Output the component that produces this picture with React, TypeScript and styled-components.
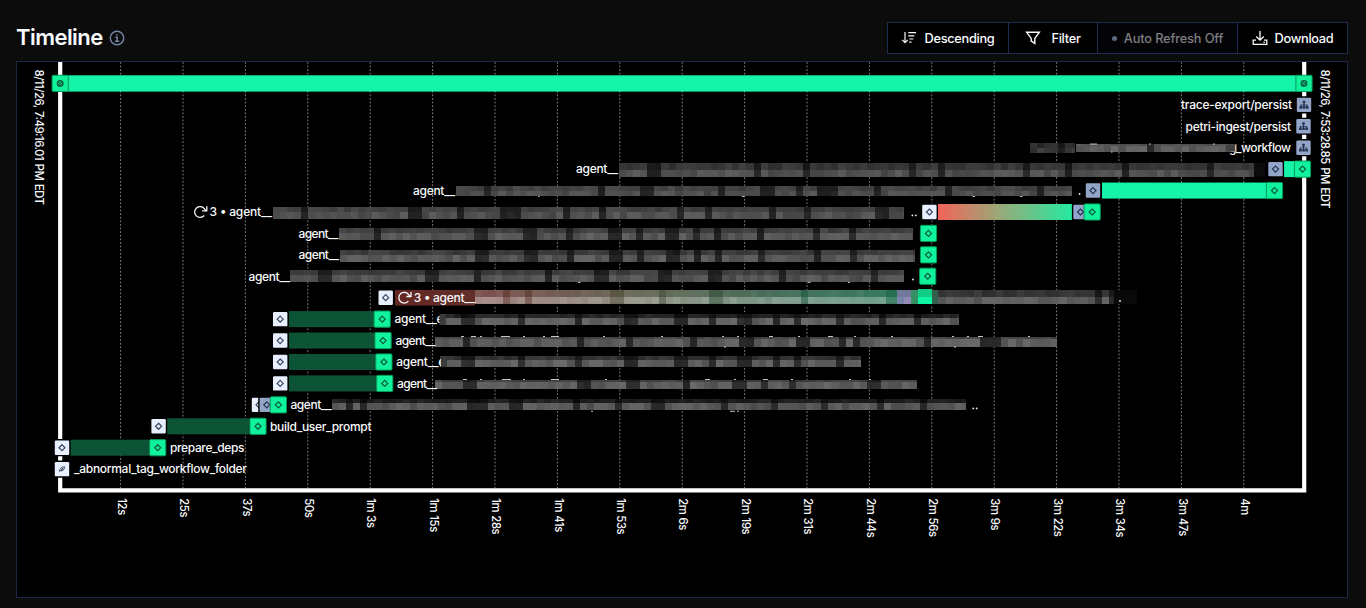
import React from "react";
import styled, { createGlobalStyle } from "styled-components";

const GlobalStyle = createGlobalStyle`
  * { box-sizing: border-box; }
  body {
    margin: 0;
    background: #0c0c0c;
    color: #f8fafc;
    font-family: Inter, "Liberation Sans", sans-serif;
    overflow: hidden;
  }
`;

const Page = styled.main`
  display: flex;
  flex-direction: column;
  height: 608px;
  padding: 22px 18px 10px 16px;
`;

const Header = styled.header`
  display: flex;
  align-items: center;
  justify-content: space-between;
  height: 32px;
  margin-bottom: 7px;
`;

const Heading = styled.div`
  display: flex;
  align-items: center;
  gap: 6px;
`;

const Title = styled.h2`
  margin: -2px 0 0;
  font-size: 22px;
  line-height: 30px;
  font-weight: 600;
  letter-spacing: -0.55px;
`;

const Toolbar = styled.div`
  display: flex;
  height: 32px;
  border: 1px solid #1f2c4d;
  background: #000;
`;

const ToolButton = styled.button<{ $width: number; $gap?: number; $muted?: boolean }>`
  display: flex;
  align-items: center;
  justify-content: center;
  gap: ${(p) => p.$gap ?? 7}px;
  width: ${(p) => p.$width}px;
  padding: 0;
  border: 0;
  background: ${(p) => (p.$muted ? "#040406" : "#000")};
  color: ${(p) => (p.$muted ? "#7c7d80" : "#f8fafc")};
  font: 500 12.8px Inter, sans-serif;
  letter-spacing: ${(p) => (p.$muted ? -0.15 : -0.3)}px;
  white-space: nowrap;
  & + & { border-left: 1px solid #1f2c4d; }
`;

const StatusDot = styled.span`
  width: 5px;
  height: 5px;
  border-radius: 50%;
  background: #5b6880;
`;

const Panel = styled.section`
  flex: 1;
  min-height: 0;
  border: 1px solid #1b2744;
  background: #000;
`;

const Chart = styled.svg`
  display: block;
  width: 1330px;
  height: 535px;
`;

const Label = styled.text`
  fill: #f8fafc;
  font: 500 12px Inter, sans-serif;
  white-space: pre;
`;

const TickLabel = styled(Label)`
  font-size: 11.3px;
  letter-spacing: -0.4px;
  word-spacing: 0.5px;
`;

const DateLabel = styled(Label)`
  font-size: 11.5px;
  word-spacing: 1px;
`;

const ROW = 21.43;
const rowY = (i: number) => 83.4 + i * ROW;

const ticks = [
  "12s", "25s", "37s", "50s", "1m 3s", "1m 15s", "1m 28s", "1m 41s", "1m 53s", "2m 6s",
  "2m 19s", "2m 31s", "2m 44s", "2m 56s", "3m 9s", "3m 22s", "3m 34s", "3m 47s", "4m",
];
const tickX = (i: number) => 120.6 + i * 62.4;

type Kind = "done" | "start" | "pending";

const palette: Record<Kind, { fill: string; stroke: string; ink: string }> = {
  done: { fill: "#10f29b", stroke: "#079a58", ink: "#0b5a3c" },
  start: { fill: "#e8effe", stroke: "#e8effe", ink: "#3a4661" },
  pending: { fill: "#92a4c8", stroke: "#92a4c8", ink: "#26344f" },
};

function Glyph({ shape, ink }: { shape: string; ink: string }) {
  if (shape === "root")
    return (
      <g fill="none" stroke={ink} strokeWidth="1.1">
        <circle r="2.9" />
        <path d="M-2.4 1.3C-.8 1.4 1.2-.4 1.4-2.3M-1.2 2.5C.6 2.3 2.3.6 2.4-1M-2.7-.3C-1.4-.4-.4-1.4-.3-2.6" />
      </g>
    );
  if (shape === "feather")
    return (
      <g fill="none" stroke={ink} strokeWidth=".9">
        <path d="M-2.7 2.5C-2.4-.6-.3-2.3 2.6-2.3C2.5.6.6 1.9-1.9 1.7M-1.5.9L1.4-1.3M-1 1.7L2 .1" />
      </g>
    );
  if (shape === "tree")
    return (
      <g fill={ink}>
        <path d="M-1.3-4h2.6v2.5H.5v1.2h3V1.2h1v2.6H1.8V1.2h.8V.6H.5v.6h.8v2.6h-2.6V1.2h.8V.6h-2.1v.6h.8v2.6h-2.7V1.2h1V-.3h3v-1.2h-.8z" />
      </g>
    );
  return <path d="M0-3L3 0L0 3L-3 0Z" fill="none" stroke={ink} strokeWidth="1.2" />;
}

function Node({ x, row, kind, shape = "diamond", clip }: { x: number; row: number; kind: Kind; shape?: string; clip?: boolean }) {
  const c = palette[kind];
  const s = kind === "done" ? 16.2 : 14.4;
  return (
    <g transform={`translate(${x} ${rowY(row)})`}>
      {clip ? null : <rect x={-8.6} y={-8.6} width={17.2} height={17.2} rx="1" fill="#000" />}
      <rect x={-s / 2} y={-s / 2} width={s} height={s} rx="1.2" fill={c.fill} stroke={kind === "done" ? c.stroke : "none"} strokeWidth="1" />
      <Glyph shape={shape} ink={c.ink} />
    </g>
  );
}

function Retry({ x, y }: { x: number; y: number }) {
  return (
    <g transform={`translate(${x} ${y})`} fill="none" stroke="#f8fafc" strokeWidth="1.3">
      <path d="M3.9 3.5A5.4 5.4 0 1 1 4.2-3L5.7-1.2" />
      <path d="M6.5-5.8V-1.2H1.9" />
    </g>
  );
}

interface Redaction {
  start: number;
  end: number;
  top: number;
  split: number;
  bottom: number;
  gaps: [number, number][];
  topLevel?: number;
  level?: number;
}

const CELL = 7.08;
const groupedGaps: [number, number][] = [
  [463, 477], [520, 527], [575, 582], [623, 638], [673, 687], [707, 715], [735, 748],
  [770, 777], [791, 798], [840, 847], [862, 868], [882, 889], [917, 924],
];
const pairGaps: [number, number][] = [
  [372, 378], [477, 490], [526, 540], [568, 575], [610, 623], [637, 644], [665, 679],
  [693, 700], [715, 722], [757, 763], [812, 819], [847, 854],
];

const redactions: Redaction[] = [
  { start: 1030, end: 1075, top: 143, split: 147.5, bottom: 152.6, gaps: [[1056, 1064]], level: 54, topLevel: 44 },
  { start: 1076, end: 1237, top: 144.3, split: 146, bottom: 151.6, gaps: [[1149, 1156], [1215, 1220]], level: 92, topLevel: 84 },
  { start: 619, end: 1254, top: 163, split: 169.6, bottom: 176.6, gaps: [[645, 658], [757, 763], [805, 813], [857, 863], [910, 917], [937, 945], [1023, 1030], [1065, 1072], [1121, 1128], [1205, 1212]], level: 80, topLevel: 55 },
  { start: 456, end: 1072, top: 186, split: 190.6, bottom: 196, gaps: [[483, 490], [596, 603], [638, 652], [715, 722], [763, 777], [798, 805], [820, 835], [877, 883], [945, 952], [1037, 1044]], level: 77, topLevel: 67 },
  { start: 273, end: 904, top: 207, split: 211.6, bottom: 219, gaps: [[302, 308], [407, 420], [456, 463], [500, 518], [546, 552], [560, 567], [596, 603], [680, 687], [708, 715], [770, 777], [805, 812], [877, 888]], level: 80, topLevel: 66 },
  { start: 339, end: 913, top: 228, split: 233, bottom: 240.2, gaps: pairGaps, level: 86, topLevel: 63 },
  { start: 340, end: 915, top: 250, split: 254.5, bottom: 261.8, gaps: pairGaps, level: 88, topLevel: 60 },
  { start: 290, end: 904, top: 270, split: 275.3, bottom: 282, gaps: [[315, 329], [427, 440], [477, 483], [547, 553], [596, 610], [657, 672], [708, 722], [778, 785], [870, 877]], level: 84, topLevel: 62 },
  { start: 440, end: 959, top: 314, split: 317.8, bottom: 325.2, gaps: groupedGaps, level: 93, topLevel: 36 },
  { start: 435, end: 1057, top: 337, split: 339, bottom: 346.6, gaps: [[463, 470], [575, 582], [623, 630], [692, 700], [742, 756], [798, 812], [841, 848], [854, 861], [923, 931], [980, 1002]], level: 92, topLevel: 70 },
  { start: 440, end: 861, top: 356, split: 360, bottom: 367.3, gaps: groupedGaps, level: 94, topLevel: 50 },
  { start: 435, end: 917, top: 380, split: 381.8, bottom: 389, gaps: [[463, 475], [575, 588], [623, 637], [680, 692], [735, 749], [762, 770], [791, 798], [868, 882]], level: 92, topLevel: 65 },
  { start: 332, end: 966, top: 399.3, split: 403, bottom: 410, gaps: [[349, 356], [363, 370], [470, 491], [512, 526], [575, 582], [615, 623], [651, 665], [722, 728], [770, 777], [820, 827], [875, 882], [917, 924]], level: 88, topLevel: 32 },
];

const jitter = (n: number) => {
  const v = Math.sin(n * 12.9898) * 43758.5453;
  return v - Math.floor(v);
};

function Mosaic({ start, end, top, split, bottom, gaps, topLevel = 60, level = 85 }: Redaction) {
  const cells: React.ReactNode[] = [];
  const count = Math.ceil((end - start) / CELL);
  for (let i = 0; i < count; i++) {
    const x = start + i * CELL;
    const w = Math.min(CELL, end - x);
    const mid = x + w / 2;
    const dim = gaps.some(([a, b]) => mid > a && mid < b) ? 0.45 : 1;
    const a = Math.round((topLevel + (jitter(i + top) - 0.5) * 18) * dim);
    const b = Math.round((level + (jitter(i * 2 + bottom) - 0.5) * 26) * dim);
    cells.push(
      <g key={i}>
        <rect x={x} y={top} width={w + 0.1} height={split - top} fill={`rgb(${a},${a},${a})`} />
        <rect x={x} y={split} width={w + 0.1} height={bottom - split} fill={`rgb(${b},${b},${b})`} />
      </g>,
    );
  }
  return <g shapeRendering="crispEdges">{cells}</g>;
}

function RetriedRun() {
  const cells: React.ReactNode[] = [];
  for (let x = 475; x < 932; x += CELL) {
    const gap = [[503, 510], [525, 532], [610, 623], [658, 665], [708, 721], [799, 806], [885, 897]].some(([a, b]) => x + 3 > a && x + 3 < b);
    cells.push(
      <g key={x} fill="#fff">
        <rect x={x} y="290" width={CELL} height="7" opacity={gap ? 0.08 : 0.15 + jitter(x) * 0.06} />
        <rect x={x} y="297" width={CELL} height="7" opacity={gap ? 0.22 : 0.38 + jitter(x + 2) * 0.08} />
      </g>,
    );
  }
  return (
    <g>
      <rect x="395" y="290" width="537" height="15.6" fill="url(#dimRetry)" />
      <rect x="475" y="303.8" width="465" height="2.2" fill="#000" />
      <g shapeRendering="crispEdges">
        {cells}
        <rect x="896.5" y="290" width="14" height="7" fill="#71789c" />
        <rect x="896.5" y="297" width="7" height="7" fill="#7684ac" />
        <rect x="903.5" y="297" width="7" height="7" fill="#9389b5" />
        <rect x="910.5" y="290" width="7" height="14" fill="#359065" />
        <rect x="917.5" y="289" width="14.5" height="8" fill="#10cd83" />
        <rect x="917.5" y="297" width="14.5" height="7.3" fill="#10f5a3" />
      </g>
      <Mosaic start={932} end={1114} top={290} split={297} bottom={304} gaps={[[1094, 1100], [1107, 1114]]} topLevel={52} level={92} />
      <rect x="932" y="290" width="6" height="14" fill="#31604b" />
      <rect x="1114" y="290" width="23" height="14" fill="#090909" />
    </g>
  );
}

const bars = [
  { x: 290, w: 84, row: 11 }, { x: 290, w: 85, row: 12 }, { x: 290, w: 86, row: 13 },
  { x: 290, w: 87, row: 14 }, { x: 168, w: 81, row: 16 }, { x: 71, w: 78, row: 17 },
];

const labels: { x: number; row: number; text: string; w: number }[] = [
  { x: 1181, row: 1, text: "trace-export/persist", w: 111 },
  { x: 1185.5, row: 2, text: "petri-ingest/persist", w: 105.5 },
  { x: 1229, row: 3, text: "g_workflow", w: 62 },
  { x: 576, row: 4, text: "agent__", w: 42 },
  { x: 413, row: 5, text: "agent__", w: 42 },
  { x: 209.5, row: 6, text: "3 • agent__", w: 62.5 },
  { x: 298.5, row: 7, text: "agent__", w: 40 },
  { x: 298.5, row: 8, text: "agent__", w: 40.5 },
  { x: 248.5, row: 9, text: "agent__", w: 41.5 },
  { x: 413.7, row: 10, text: "3 • agent__", w: 61.5 },
  { x: 394.5, row: 11, text: "agent__e", w: 49 },
  { x: 395.5, row: 12, text: "agent__", w: 40 },
  { x: 396.3, row: 13, text: "agent__e", w: 49 },
  { x: 397, row: 14, text: "agent__", w: 40 },
  { x: 290.5, row: 15, text: "agent__", w: 41 },
  { x: 270, row: 16, text: "build_user_prompt", w: 101.5 },
  { x: 170, row: 17, text: "prepare_deps", w: 74.5 },
  { x: 74, row: 18, text: "_abnormal_tag_workflow_folder", w: 173 },
];

/* Ascender and descender tips that stay visible around redacted names. */
const tips: [number, number, number][] = [
  [461, 336.5, 3], [471, 336.5, 5], [480, 336.5, 2], [501, 336.5, 9], [523, 336.5, 2], [543, 336.5, 2], [551, 336.5, 8],
  [603, 336.5, 2], [661, 336.5, 2], [722, 336.5, 2], [737, 336.5, 2], [769, 336.5, 4], [798, 336.5, 2], [828, 336.5, 5],
  [854, 336.5, 2], [891, 336.5, 2], [952, 336.5, 2], [967, 336.5, 2], [978, 336.5, 5], [1028, 336.5, 2],
  [463, 379.5, 4], [480, 379.5, 2], [502, 379.5, 9], [523, 379.5, 2], [551, 379.5, 8], [605, 379.5, 2], [705, 379.5, 5],
  [734, 379.5, 2], [763, 379.5, 5], [791, 379.5, 2], [849, 379.5, 2], [869, 379.5, 2],
  [1090, 144, 7], [1111, 152, 1.6], [1149, 144, 2], [1213, 144, 2],
  [742, 196.5, 2.5], [972.5, 196.5, 2.5], [1020, 196.5, 2.5], [538, 196.3, 1.5], [578, 282.3, 2.5], [808, 282.3, 2.5], [848, 282.3, 2],
  [591, 411.2, 2], [730, 411.2, 5], [737, 411.2, 2], [724, 347, 2], [954, 347, 2],
];
const dots: [number, number][] = [
  [1079.6, 194], [912.4, 215.4], [915.8, 215.4], [913, 279.5], [1120, 301], [973.3, 408.4], [976.7, 408.4],
];

function Timeline() {
  return (
    <Chart viewBox="17 62 1330 535" role="img" aria-label="Workflow timeline">
      <defs>
        <linearGradient id="retry">
          <stop offset="0" stopColor="#f36359" />
          <stop offset=".45" stopColor="#9ba878" />
          <stop offset="1" stopColor="#24eaa1" />
        </linearGradient>
        <linearGradient id="dimRetry">
          <stop offset="0" stopColor="#652724" />
          <stop offset=".18" stopColor="#60302a" />
          <stop offset=".45" stopColor="#4b4d37" />
          <stop offset=".68" stopColor="#254f38" />
          <stop offset="1" stopColor="#0a6944" />
        </linearGradient>
      </defs>
      {ticks.map((t, i) => (
        <g key={t}>
          <line x1={tickX(i)} x2={tickX(i)} y1="62" y2="488" stroke="#8c8c8c" strokeWidth=".9" strokeDasharray="1.8 1.8" />
          <TickLabel transform={`translate(${tickX(i) - 2.9} 498.3) rotate(90)`}>{t}</TickLabel>
        </g>
      ))}
      <path d="M60.2 62V490.3H1304.2V62" fill="none" stroke="#fff" strokeWidth="4.2" />
      <DateLabel transform="translate(34.8 69.5) rotate(90)" textLength="135.5">8/11/26, 7:49:16.01 PM EDT</DateLabel>
      <DateLabel transform="translate(1321.3 69.5) rotate(90)" textLength="139">8/11/26, 7:53:28.85 PM EDT</DateLabel>

      <rect x="60" y="75.3" width="1244" height="16.3" fill="#16f4aa" />
      {bars.map((b) => (
        <rect key={b.row} x={b.x - 1.2} y={rowY(b.row) - 8} width={b.w + 2} height="16" fill="#0d5437" />
      ))}
      <rect x="1284" y={rowY(4) - 8} width="12" height="16" fill="#16f4aa" />
      <rect x="1102" y={rowY(5) - 8} width="165" height="16" fill="#16f4aa" />
      <rect x="938" y={rowY(6) - 8} width="134.5" height="16" fill="url(#retry)" />

      {redactions.map((r) => <Mosaic key={r.top} {...r} />)}
      <rect x="1254" y="163" width="11" height="13.6" fill="#0b0b0b" />
      <RetriedRun />
      <g fill="#d8dadd">
        {tips.map(([x, y, w]) => <rect key={`${x}-${y}`} x={x} y={y - 0.4} width={w} height=".9" />)}
      </g>
      <g fill="#eef1f5">{dots.map(([x, y]) => <circle key={x} cx={x} cy={y} r=".9" />)}</g>

      {labels.map((l) => (
        <Label key={l.row} x={l.x} y={rowY(l.row) + 4.3} textLength={l.w}>{l.text}</Label>
      ))}
      <Retry x={200.3} y={rowY(6)} />
      <Retry x={404.5} y={rowY(10)} />
      <rect x="1226" y="144.3" width="9" height="7.3" fill="#414141" />
      <rect x="439.5" y="314" width="6" height="11" fill="#3a3a3a" />
      <rect x="441" y="356" width="6" height="11" fill="#3a3a3a" />

      <Node x={60.2} row={0} kind="done" shape="root" clip />
      <Node x={1304} row={0} kind="done" shape="root" clip />
      <Node x={1304} row={1} kind="pending" shape="tree" />
      <Node x={1303.5} row={2} kind="pending" shape="tree" />
      <Node x={1303.5} row={3} kind="pending" shape="tree" />
      <Node x={1275.5} row={4} kind="pending" />
      <Node x={1302.5} row={4} kind="done" clip />
      <Node x={1093} row={5} kind="pending" />
      <Node x={1274.5} row={5} kind="done" clip />
      <Node x={929.4} row={6} kind="start" />
      <Node x={1080.5} row={6} kind="pending" />
      <Node x={1092.2} row={6} kind="done" clip />
      <Node x={928.5} row={7} kind="done" />
      <Node x={928.5} row={8} kind="done" />
      <Node x={927.7} row={9} kind="done" />
      <Node x={385.7} row={10} kind="start" />
      {[11, 12, 13, 14].map((r) => <Node key={r} x={280.2} row={r} kind="start" />)}
      {[11, 12, 13, 14].map((r) => <Node key={r} x={382.2 + (r - 11) * 0.85} row={r} kind="done" clip />)}
      <Node x={259} row={15} kind="start" />
      <Node x={266.8} row={15} kind="pending" />
      <Node x={278.4} row={15} kind="done" clip />
      <Node x={158.6} row={16} kind="start" />
      <Node x={258} row={16} kind="done" />
      <Node x={62} row={17} kind="start" />
      <Node x={157.7} row={17} kind="done" />
      <Node x={62} row={18} kind="start" shape="feather" />
    </Chart>
  );
}

export default function App() {
  return (
    <>
      <GlobalStyle />
      <Page>
        <Header>
          <Heading>
            <Title>Timeline</Title>
            <svg width="16" height="16" viewBox="0 0 16 16" fill="none" stroke="#7686a6" strokeWidth="1.4">
              <circle cx="8" cy="8" r="6.7" />
              <path d="M8 4v1.6M6.3 7.3h1.9v3.9M6 11.3h4.2" />
            </svg>
          </Heading>
          <Toolbar>
            <ToolButton $width={120}>
              <svg width="16" height="14" viewBox="0 0 16 14" fill="none" stroke="#f8fafc" strokeWidth="1.2">
                <path d="M4 1v10.5M1.2 8.8L4 11.6l2.8-2.8M7.3 1.6H15M7.3 4.8h6M8.3 8h4M8.3 11.2h2.2" />
              </svg>
              Descending
            </ToolButton>
            <ToolButton $width={89} $gap={10}>
              <svg width="16" height="14" viewBox="0 0 16 14" fill="none" stroke="#f8fafc" strokeWidth="1.4">
                <path d="M1.6 1.2h12.8L9.8 7.4v5L6.2 10.2V7.4z" />
              </svg>
              Filter
            </ToolButton>
            <ToolButton $width={140} $muted>
              <StatusDot />
              Auto Refresh Off
            </ToolButton>
            <ToolButton $width={110}>
              <svg width="16" height="16" viewBox="0 0 16 16" fill="none" stroke="#f8fafc" strokeWidth="1.3">
                <path d="M8 1v9M4.2 6.5L8 10.2l3.8-3.7M4 10.2H1.2v4.2h13.6v-4.2H12M11.4 12.4h1.4" />
              </svg>
              Download
            </ToolButton>
          </Toolbar>
        </Header>
        <Panel>
          <Timeline />
        </Panel>
      </Page>
    </>
  );
}
